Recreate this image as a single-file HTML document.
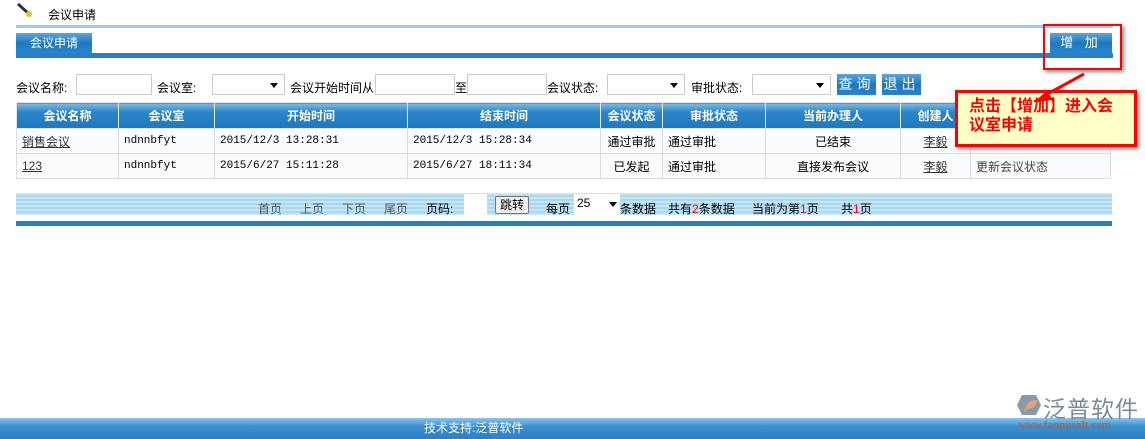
<!DOCTYPE html>
<html><head><meta charset="utf-8"><style>
*{margin:0;padding:0;box-sizing:border-box}
body{width:1145px;height:439px;background:#fff;font-family:"Liberation Sans","Noto Sans CJK SC",sans-serif;font-size:12px;color:#000;position:relative;overflow:hidden}
.a{position:absolute}
.btn{background:linear-gradient(#5aa6dc,#1f78bf 50%,#2a84c8);color:#fff;text-align:center;line-height:20px;font-size:13px;letter-spacing:4px}
input,.sel{position:absolute;height:21px;border:1px solid #ccc;background:#fff}
.sel:after{content:"";position:absolute;right:6px;top:8px;border:4px solid transparent;border-top:5px solid #000}
table{position:absolute;left:16px;top:102px;width:1095px;border-collapse:collapse}
th{height:26px;background:linear-gradient(#7bbce6,#2a85c9 35%,#1f78bf);color:#fff;font-weight:bold;font-size:12px;border:1px solid #e5e5e5}
td{height:25px;border:1px solid #ddd;padding-left:5px;font-size:12px}
.m{font-family:"Liberation Mono",monospace;font-size:11px}
.c{text-align:center;padding:0}
u{color:#333}
.p{position:absolute;top:200px;white-space:nowrap}
</style></head><body>
<svg class="a" style="left:16px;top:2px" width="18" height="16"><line x1="2" y1="2" x2="12" y2="11" stroke="#333" stroke-width="3"/><circle cx="13" cy="12" r="3" fill="#f0c020"/></svg>
<div class="a" style="left:48px;top:6px;font-size:12px">会议申请</div>
<div class="a" style="left:16px;top:25px;width:1097px;height:3px;background:#9dcaec"></div>
<div class="a btn" style="left:16px;top:33px;width:76px;letter-spacing:0;font-size:12px">会议申请</div>
<div class="a" style="left:16px;top:53px;width:1097px;height:5px;background:#2581c4"></div>
<div class="a btn" style="left:1050px;top:33px;width:62px">增 加</div>
<div class="a" style="left:1043px;top:24px;width:79px;height:46px;border:2px solid #f00;box-shadow:2px 2px 4px #888"></div>
<div class="a" style="left:16px;top:79px">会议名称:</div>
<input style="left:76px;top:74px;width:76px">
<div class="a" style="left:157px;top:79px">会议室:</div>
<div class="sel" style="left:212px;top:74px;width:73px"></div>
<div class="a" style="left:290px;top:79px">会议开始时间从</div>
<input style="left:375px;top:74px;width:80px">
<div class="a" style="left:455px;top:79px">至</div>
<input style="left:467px;top:74px;width:80px">
<div class="a" style="left:547px;top:79px">会议状态:</div>
<div class="sel" style="left:607px;top:74px;width:78px"></div>
<div class="a" style="left:691px;top:79px">审批状态:</div>
<div class="sel" style="left:752px;top:74px;width:79px"></div>
<div class="a btn" style="left:837px;top:74px;width:39px;height:21px;font-size:14px">查询</div>
<div class="a btn" style="left:882px;top:74px;width:39px;height:21px;font-size:14px">退出</div>
<table>
<tr><th style="width:102px">会议名称</th><th style="width:96px">会议室</th><th style="width:193px">开始时间</th><th style="width:193px">结束时间</th><th style="width:62px">会议状态</th><th style="width:103px">审批状态</th><th style="width:135px">当前办理人</th><th style="width:70px">创建人</th><th></th></tr>
<tr style="background:#f9fbfd"><td><u>销售会议 </u></td><td class="m">ndnnbfyt</td><td class="m">2015/12/3 13:28:31</td><td class="m">2015/12/3 15:28:34</td><td class="c">通过审批</td><td>通过审批</td><td class="c">已结束</td><td class="c"><u>李毅</u></td><td></td></tr>
<tr style="background:#f9fbfd"><td><u>123 </u></td><td class="m">ndnnbfyt</td><td class="m">2015/6/27 15:11:28</td><td class="m">2015/6/27 18:11:34</td><td class="c">已发起</td><td>通过审批</td><td class="c">直接发布会议</td><td class="c"><u>李毅</u></td><td style="color:#444">更新会议状态</td></tr>
</table>
<div class="a" style="left:955px;top:90px;width:182px;height:57px;background:#ffffc8;border:3px solid #f00;box-shadow:2px 2px 4px #888;color:#f00;font-weight:bold;font-size:16px;line-height:19px;padding:4px 14px 0 11px">点击【增加】进入会议室申请</div>
<svg class="a" style="left:1030px;top:70px" width="60" height="35"><line x1="54" y1="4" x2="12" y2="27" stroke="#f00" stroke-width="3"/><polygon points="4,32 18,20 22,30" fill="#f00"/></svg>
<div class="a" style="left:16px;top:193px;width:1096px;height:22px;background:repeating-linear-gradient(#c5e6f5 0 2px,#a9d8ef 2px 4px)"></div>
<div class="p" style="left:258px;color:#555">首页</div>
<div class="p" style="left:300px;color:#555">上页</div>
<div class="p" style="left:342px;color:#555">下页</div>
<div class="p" style="left:384px;color:#555">尾页</div>
<div class="p" style="left:426px">页码:</div>
<div class="a" style="left:464px;top:194px;width:23px;height:21px;background:#fff"></div>
<div class="a" style="left:495px;top:196px;width:34px;height:18px;border:1px solid #777;border-radius:2px;background:#eee;text-align:center;line-height:16px">跳转</div>
<div class="p" style="left:546px">每页</div>
<div class="a" style="left:574px;top:194px;width:46px;height:21px;background:#fff;font-size:12px;padding:2px 3px">25<span style="position:absolute;right:3px;top:8px;border:4px solid transparent;border-top:5px solid #000"></span></div>
<div class="p" style="left:620px">条数据</div>
<div class="p" style="left:668px">共有<span style="color:#f00">2</span>条数据</div>
<div class="p" style="left:752px">当前为第<span style="color:#f00">1</span>页</div>
<div class="p" style="left:841px">共<span style="color:#f00">1</span>页</div>
<div class="a" style="left:16px;top:221px;width:1096px;height:5px;background:#2581c4"></div>
<div class="a" style="left:0;top:418px;width:1145px;height:21px;background:linear-gradient(#8cc4ec,#3a90d0 40%,#2a80c4);color:#fff;line-height:20px">
<span style="position:absolute;left:424px">技术支持:泛普软件</span></div>
<svg class="a" style="left:1016px;top:393px" width="26" height="24"><polygon points="6,2 20,2 25,12 20,22 6,22 1,12" fill="#8a9aa8"/><path d="M8,18 Q12,6 22,7 L18,14 Z" fill="#e8a07a"/></svg>
<div class="a" style="left:1043px;top:390px;font-size:23px;color:#7a8a98;letter-spacing:1px">泛普软件</div>
<div class="a" style="left:1018px;top:419px;font-family:'Liberation Serif',serif;font-size:11px;font-weight:bold;color:#9a6a5a">www.fanpusoft.com</div>
</body></html>
